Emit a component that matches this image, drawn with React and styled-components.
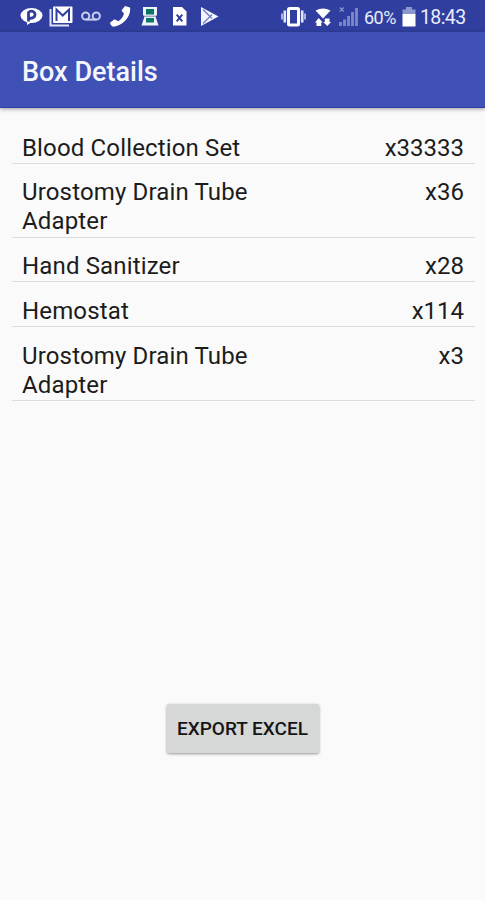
import React from "react";
import styled, { createGlobalStyle } from "styled-components";

const GlobalStyle = createGlobalStyle`
  * {
    box-sizing: border-box;
  }
  body {
    margin: 0;
    background-color: #fafafa;
    font-family: Roboto, sans-serif;
  }
`;

const Screen = styled.div`
  height: 900px;
  width: 485px;
  display: flex;
  flex-direction: column;
  overflow: hidden;
  background-color: #fafafa;
`;

const StatusBar = styled.div`
  height: 32px;
  width: 100%;
  display: flex;
  justify-content: space-between;
  padding: 0 18px 0 20px;
  background-color: #303f9f;
  color: #e9ecfb;
`;

const StatusGroup = styled.div`
  height: 100%;
  display: flex;
  align-items: center;
`;

const StatusIcon = styled.svg`
  display: block;
  flex: none;
  width: ${(props) => props.$width}px;
  height: 32px;
  margin-right: ${(props) => props.$gap}px;
`;

const StatusText = styled.div`
  font-size: ${(props) => props.$size}px;
  line-height: 32px;
  width: ${(props) => props.$width}px;
  margin-right: ${(props) => props.$gap || 0}px;
  padding-top: 3px;
  letter-spacing: ${(props) => props.$spacing || 0}px;
  white-space: nowrap;
`;

const Toolbar = styled.div`
  height: 76px;
  width: 100%;
  display: flex;
  align-items: center;
  padding: 4px 22px 0;
  background-color: #3f51b5;
  border-bottom: 1px solid #2c43af;
  box-shadow: 0 1px 4px rgba(0, 0, 0, 0.4);
`;

const Title = styled.h1`
  margin: 0;
  color: #f4f6ff;
  font-size: 27px;
  font-weight: 500;
  line-height: 32px;
`;

const ItemList = styled.div`
  display: flex;
  flex-direction: column;
  padding: 11px 10px 0 12px;
`;

const ItemRow = styled.div`
  display: flex;
  justify-content: space-between;
  padding: 14.5px 11px 0.3px 10px;
  border-bottom: 1px solid #dcdcdc;
  color: #1c1c1c;
  font-size: 24px;
  line-height: 29px;
`;

const ItemName = styled.div`
  width: 260px;
  letter-spacing: 0.15px;
`;

const ItemCount = styled.div`
  text-align: right;
`;

const ButtonArea = styled.div`
  flex: 1;
  display: flex;
  justify-content: center;
  align-items: flex-end;
  padding-bottom: 147px;
`;

const ExportButton = styled.button`
  height: 49px;
  width: 152px;
  padding: 0;
  border: none;
  border-radius: 2px;
  background-color: #d6d8d7;
  box-shadow: 0 1px 3px rgba(0, 0, 0, 0.4);
  color: #151515;
  font-family: Roboto, sans-serif;
  font-size: 19px;
  font-weight: 500;
  white-space: nowrap;
  cursor: pointer;
`;

const items = [
  { name: "Blood Collection Set", count: 33333 },
  { name: "Urostomy Drain Tube Adapter", count: 36 },
  { name: "Hand Sanitizer", count: 28 },
  { name: "Hemostat", count: 114 },
  { name: "Urostomy Drain Tube Adapter", count: 3 },
];

const ChatIcon = () => (
  <StatusIcon $width={23} $gap={6} viewBox="0 0 23 32">
    <ellipse cx="11.5" cy="15.5" rx="11" ry="7.5" fill="#fff" />
    <path d="M7 20v5l5-3z" fill="#fff" />
    <path
      d="M8.500 21.500V12M8.500 12.500c2-2.500 6.500-1.500 6.500 2s-4.500 4.500-6.500 3"
      fill="none"
      stroke="#303f9f"
      strokeWidth="2.800"
    />
  </StatusIcon>
);

const MailIcon = () => (
  <StatusIcon $width={24} $gap={8} viewBox="0 0 24 32">
    <path d="M1.500 9v16.500H20" fill="none" stroke="#dfe4fa" strokeWidth="2" />
    <rect x="4" y="6.500" width="19.500" height="16.500" rx="1" fill="#fff" />
    <path
      d="M7.500 21V9.500l6.250 6 6.250-6V21"
      fill="none"
      stroke="#303f9f"
      strokeWidth="2"
    />
  </StatusIcon>
);

const VoicemailIcon = () => (
  <StatusIcon $width={20} $gap={8} viewBox="0 0 20 32">
    <g fill="none" stroke="#c7cef0" strokeWidth="2">
      <circle cx="4.700" cy="16" r="3.600" />
      <circle cx="15.300" cy="16" r="3.600" />
      <path d="M4.700 19.600h10.600" />
    </g>
  </StatusIcon>
);

const PhoneIcon = () => (
  <StatusIcon $width={22} $gap={10} viewBox="0 0 22 32">
    <path
      d="M16 6l5 1.500c1.600 8.500-7 18.500-16.500 19.300-2-.5-3-2-3.500-4l4.500-3.500 3.800 2c3-1.800 4.700-4.300 5.700-7.600l-2.500-3.200z"
      fill="#fff"
    />
  </StatusIcon>
);

const DeviceIcon = () => (
  <StatusIcon $width={18} $gap={13} viewBox="0 0 18 32">
    <path d="M2 7h14v8l-1.500 1.500L17.500 25.500H.5L3.500 16.500 2 15z" fill="#eef3f5" />
    <path d="M5 9h8v5.500H5zM5 18h8v4.500H5z" fill="#087568" />
    <path d="M3 16.200h12" stroke="#7d88b8" strokeWidth="1" />
  </StatusIcon>
);

const FileIcon = () => (
  <StatusIcon $width={15} $gap={13} viewBox="0 0 15 32">
    <path d="M1 7h9l4.500 4.500v14H1z" fill="#fff" />
    <path
      d="M4.700 14.700l5.600 6.600M10.300 14.700l-5.600 6.600"
      stroke="#303f9f"
      strokeWidth="1.900"
    />
  </StatusIcon>
);

const PlayIcon = () => (
  <StatusIcon $width={19} $gap={0} viewBox="0 0 19 32">
    <path d="M1 7v19L18.500 16.500z" fill="#f2f5ff" />
    <path
      d="M3 9.500l9 9M3 23.500l9-9"
      stroke="#6f7dc6"
      strokeWidth="1.300"
    />
  </StatusIcon>
);

const VibrateIcon = () => (
  <StatusIcon $width={25} $gap={9} viewBox="0 0 25 32">
    <rect
      x="7.500"
      y="8.500"
      width="10"
      height="16.500"
      rx="1"
      fill="none"
      stroke="#fff"
      strokeWidth="3"
    />
    <path d="M3.800 10.500v12M21.200 10.500v12" stroke="#e3e7fa" strokeWidth="2.600" />
    <path d="M1 13.500v6M24 13.500v6" stroke="#c7cef0" strokeWidth="1.600" />
  </StatusIcon>
);

const WifiIcon = () => (
  <StatusIcon $width={16} $gap={8} viewBox="0 0 16 32">
    <path d="M.5 10.500Q8 6.500 15.500 10.500L8 18.500z" fill="#fff" />
    <path
      d="M3.700 18l4 4.500H6.200V26H1.500v-3.500H0zM12.300 26l-4-4h1.500v-3.500h4.700V22H16z"
      fill="#fff"
    />
  </StatusIcon>
);

const SignalIcon = () => (
  <StatusIcon $width={20} $gap={5} viewBox="0 0 20 32">
    <path
      d="M1.500 22v4M5.500 19.500V26M9.500 16v10M13.500 12v14M17.500 8v18"
      stroke="#7d89c9"
      strokeWidth="2.800"
    />
    <path d="M.8 7.500l4 4M4.800 7.500l-4 4" stroke="#8994cd" strokeWidth="1.200" />
  </StatusIcon>
);

const BatteryIcon = () => (
  <StatusIcon $width={14} $gap={4} viewBox="0 0 14 32">
    <path d="M4 7h6v2.500h3.500V14H.5V9.500H4z" fill="#8c97d0" />
    <path d="M.5 14h13v12.500H.5z" fill="#fff" />
  </StatusIcon>
);

const App = () => {
  return (
    <>
      <GlobalStyle />
      <Screen>
        <StatusBar>
          <StatusGroup>
            <ChatIcon />
            <MailIcon />
            <VoicemailIcon />
            <PhoneIcon />
            <DeviceIcon />
            <FileIcon />
            <PlayIcon />
          </StatusGroup>
          <StatusGroup>
            <VibrateIcon />
            <WifiIcon />
            <SignalIcon />
            <StatusText $size={18} $width={33} $gap={5} $spacing={-0.5}>
              60%
            </StatusText>
            <BatteryIcon />
            <StatusText $size={19.5} $width={47} $spacing={-0.6}>
              18:43
            </StatusText>
          </StatusGroup>
        </StatusBar>
        <Toolbar>
          <Title>Box Details</Title>
        </Toolbar>
        <ItemList>
          {items.map((item, index) => (
            <ItemRow key={index}>
              <ItemName>{item.name}</ItemName>
              <ItemCount>x{item.count}</ItemCount>
            </ItemRow>
          ))}
        </ItemList>
        <ButtonArea>
          <ExportButton>EXPORT EXCEL</ExportButton>
        </ButtonArea>
      </Screen>
    </>
  );
};

export default App;
